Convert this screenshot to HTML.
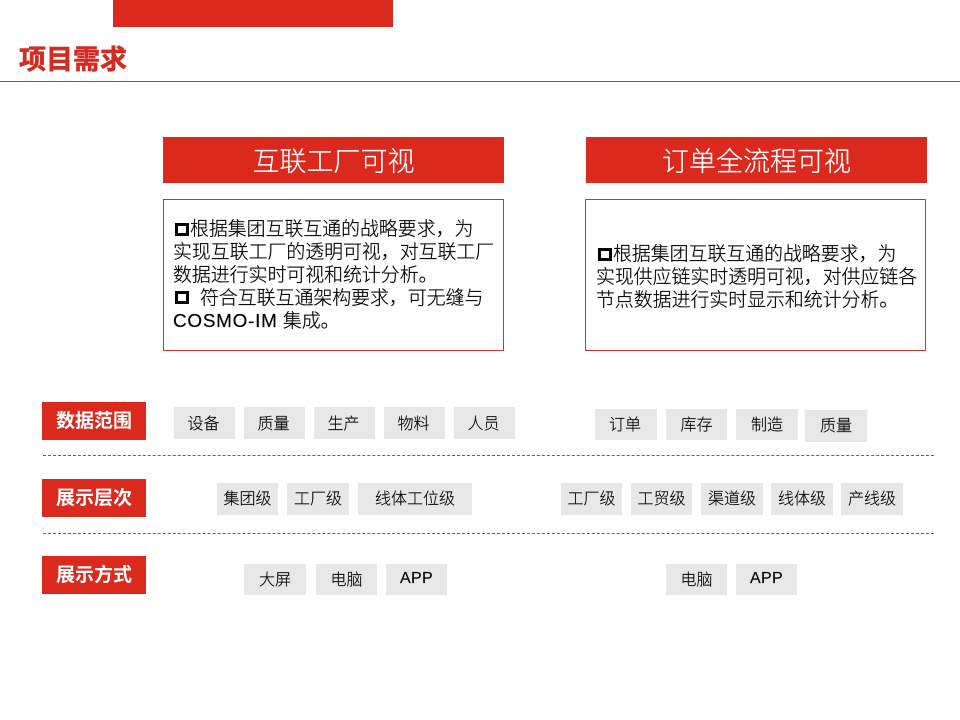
<!DOCTYPE html>
<html lang="zh">
<head>
<meta charset="utf-8">
<style>
html,body{margin:0;padding:0;background:#fff;}
#p{position:relative;width:960px;height:720px;overflow:hidden;background:#fff;font-family:"Liberation Sans","Noto Sans CJK SC",sans-serif;color:#000;}
#p div{position:absolute;box-sizing:border-box;white-space:nowrap;}
.r{background:#dc291e;}
.hd{background:#dc291e;color:#fff;font-size:27px;font-weight:300;line-height:50px;height:46px;width:341px;top:137px;text-align:center;-webkit-text-stroke:0.2px #fff;}
.box{border:1px solid #d03328;top:199px;height:152px;width:341px;background:#fff;}
.l{font-size:18.9px;font-weight:300;line-height:23px;height:23px;color:#000;-webkit-text-stroke:0.2px #000;}
.q{width:14px;height:13px;border:3px solid #000;}
.lb{background:#dc291e;color:#fff;font-size:19px;font-weight:700;left:42px;width:104px;height:38px;line-height:40px;text-align:center;}
.t{background:#e7e7e7;font-size:16px;font-weight:300;text-align:center;color:#000;-webkit-text-stroke:0.15px #000;}
.d{left:43px;width:891px;height:0;border-top:1px dashed #d03328;}
</style>
</head>
<body>
<div id="p">
<div class="r" style="left:113px;top:0;width:280px;height:27px"></div>
<div style="left:19px;top:40px;font-size:27px;font-weight:700;line-height:40px;color:#d42c22;-webkit-text-stroke:0.6px #d42c22">项目需求</div>
<div style="left:0;top:81px;width:960px;height:1px;background:#d03328"></div>

<div class="hd" style="left:163px">互联工厂可视</div>
<div class="hd" style="left:586px">订单全流程可视</div>

<div class="box" style="left:163px"></div>
<div class="box" style="left:585px"></div>

<div class="q" style="left:175px;top:223px"></div>
<div class="l" style="left:190px;top:218px">根据集团互联互通的战略要求，为</div>
<div class="l" style="left:173px;top:241px">实现互联工厂的透明可视，对互联工厂</div>
<div class="l" style="left:173px;top:264px">数据进行实时可视和统计分析。</div>
<div class="q" style="left:175px;top:291px"></div>
<div class="l" style="left:200px;top:287px">符合互联互通架构要求，可无缝与</div>
<div class="l" style="left:173px;top:310px"><span style="letter-spacing:.75px">COSMO-IM</span> 集成。</div>

<div class="q" style="left:598px;top:248px"></div>
<div class="l" style="left:613px;top:243px">根据集团互联互通的战略要求，为</div>
<div class="l" style="left:596px;top:266px">实现供应链实时透明可视，对供应链各</div>
<div class="l" style="left:596px;top:289px">节点数据进行实时显示和统计分析。</div>

<div class="lb" style="top:402px">数据范围</div>
<div class="lb" style="top:479px">展示层次</div>
<div class="lb" style="top:556px">展示方式</div>

<div class="d" style="top:455px"></div>
<div class="d" style="top:533px"></div>

<div class="t" style="left:174px;top:407px;width:61px;height:32px;line-height:36px;padding-right:2px">设备</div>
<div class="t" style="left:244px;top:407px;width:61px;height:32px;line-height:36px;padding-right:2px">质量</div>
<div class="t" style="left:314px;top:407px;width:61px;height:32px;line-height:36px;padding-right:2px">生产</div>
<div class="t" style="left:384px;top:407px;width:61px;height:32px;line-height:36px;padding-right:2px">物料</div>
<div class="t" style="left:454px;top:407px;width:61px;height:32px;line-height:36px;padding-right:2px">人员</div>

<div class="t" style="left:595px;top:409px;width:62px;height:31px;line-height:33px;padding-right:2px">订单</div>
<div class="t" style="left:666px;top:409px;width:61px;height:31px;line-height:33px">库存</div>
<div class="t" style="left:736px;top:409px;width:62px;height:31px;line-height:33px">制造</div>
<div class="t" style="left:805px;top:410px;width:62px;height:32px;line-height:34px">质量</div>

<div class="t" style="left:217px;top:483px;width:61px;height:32px;line-height:34px">集团级</div>
<div class="t" style="left:287px;top:483px;width:62px;height:32px;line-height:34px">工厂级</div>
<div class="t" style="left:358px;top:483px;width:114px;height:32px;line-height:34px">线体工位级</div>

<div class="t" style="left:561px;top:483px;width:61px;height:32px;line-height:34px">工厂级</div>
<div class="t" style="left:631px;top:483px;width:61px;height:32px;line-height:34px">工贸级</div>
<div class="t" style="left:701px;top:483px;width:62px;height:32px;line-height:34px">渠道级</div>
<div class="t" style="left:771px;top:483px;width:62px;height:32px;line-height:34px">线体级</div>
<div class="t" style="left:841px;top:483px;width:62px;height:32px;line-height:34px">产线级</div>

<div class="t" style="left:244px;top:564px;width:62px;height:31px;line-height:33px">大屏</div>
<div class="t" style="left:316px;top:564px;width:61px;height:31px;line-height:33px">电脑</div>
<div class="t" style="left:386px;top:564px;width:61px;height:31px;line-height:30px;letter-spacing:.3px">APP</div>

<div class="t" style="left:666px;top:564px;width:61px;height:31px;line-height:33px">电脑</div>
<div class="t" style="left:736px;top:564px;width:61px;height:31px;line-height:30px;letter-spacing:.3px">APP</div>
</div>
</body>
</html>
